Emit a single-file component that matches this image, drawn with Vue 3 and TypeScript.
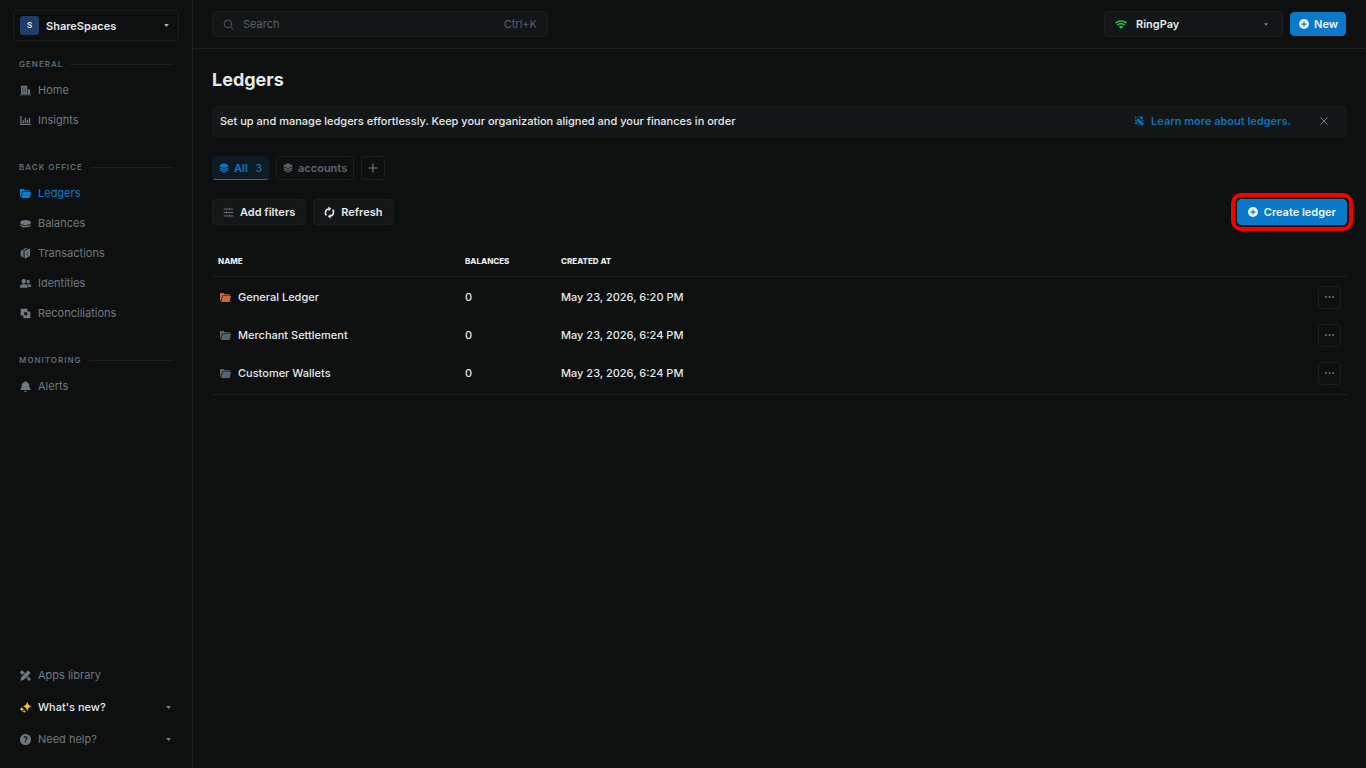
<script setup lang="ts">
import { ref } from 'vue'

interface NavItem {
  label: string
  icon: string
  active?: boolean
}
interface NavGroup {
  title: string
  items: NavItem[]
}
interface Ledger {
  name: string
  balances: number
  createdAt: string
  primary?: boolean
}

const icons: Record<string, string> = {
  building: 'M1.500 1h9v13h-9zM11.500 6h3v8h-3zM0 13.500h16V15H0zM3.500 3.500V5h1.700V3.500zM6.800 3.500V5h1.700V3.500zM3.500 6.500V8h1.700V6.500zM6.800 6.500V8h1.700V6.500zM3.500 9.500V11h1.700V9.500zM6.800 9.500V11h1.700V9.500z',
  chart: 'M.5 1.500h1.800v11.200H15.500v1.800H.5zM3.800 7.500h2v4.300h-2zM6.800 4h2v7.800h-2zM9.800 7h2v4.800h-2zM12.800 4.500h2v7.300h-2z',
  folder: 'M0 1.500h5.300l1.500 1.700H14.500V5H3.500L1.200 12.500 0 12.500zM4.200 5.700h11.800L14 14.500H1.500z',
  coin: 'M8 3c4.500 0 8 1.500 8 3.700s-3.500 3.700-8 3.700S0 8.900 0 6.700 3.500 3 8 3zM0 9c1.500 1.500 4.500 2.200 8 2.200s6.500-.7 8-2.200C16.300 12 12.500 13.500 8 13.500S-.3 12 0 9z',
  cards: 'M1 4.500 4.200 2v11.500L1 11.500zM5 1.700 8.500 0l2 .9-4.300 2.400V14.500L5 14zM7 4l7.500-3.200V11.500L7 15.800zM10 5.500v6.800l.8-.4V5.100z',
  people: 'M5.500 1.500a3.200 3.200 0 1 1 0 6.400 3.200 3.200 0 0 1 0-6.400zM0 14v-1.700C0 10.200 2.500 8.900 5.500 8.900S11 10.200 11 12.300V14zM11.500 2.500a2.700 2.700 0 1 1-2 4.500A4.500 4.500 0 0 0 9.700 3.200 2.700 2.700 0 0 1 11.500 2.500zM12 13v-.7c0-1.300-.5-2.500-1.400-3.400 2.900-.4 5.400.9 5.400 3.200V13z',
  recon: 'M1 1h10v4h4v10H5v-4H1zM6.200 6.200v4.300h4.300V6.200z',
  bell: 'M8 0a1 1 0 0 1 1 1v.4c2.800.5 4.500 2.500 4.500 5V9l2 3v1H.5v-1l2-3V6.400c0-2.500 1.700-4.500 4.500-5V1a1 1 0 0 1 1-1zM6 14h4a2 2 0 0 1-4 0z',
  apps: 'M11.800.5 15.500 4.200 5.300 14.400.8 15.500 1.600 11zM3.600.7 7.200 4.300 5.300 6.300 4.200 5.200 3.300 6 4.400 7.100 3.800 7.800.6 4.600a1.600 1.600 0 0 1 0-2L2 1a1.300 1.300 0 0 1 1.600-.3zM11.600 8.800l3.700 3.600a1.600 1.600 0 0 1 0 2l-.8.8a1.600 1.600 0 0 1-2 0L8.800 11.600l1-1 1.500 1.500.8-.8-1.500-1.500z',
  sparkle: 'M10.500 0 12.500 4.500 16.500 6.500 12.500 8.500l-2 4.500L8.500 8.500 4.500 6.500 8.500 4.500zM2.800 7l1.100 2.400 2.400 1.100-2.400 1.100L2.800 14l-1.100-2.400-2.400-1.100 2.400-1.100zM6 11.500l.9 1.500 1.500.7-1.500.8L6 16l-.9-1.500-1.500-.8 1.500-.7z',
  help: 'M8 0a8 8 0 1 1 0 16A8 8 0 0 1 8 0zM5 5.800h1.800C6.800 5 7.300 4.700 8 4.700c.8 0 1.300.4 1.300 1.100 0 .6-.4.9-1 1.300-.8.5-1.200 1-1.200 2.200h1.700c0-.7.300-.9 1-1.400.7-.5 1.300-1.100 1.300-2.200C11.100 4.100 9.800 3.200 8 3.200 6.200 3.200 5 4.200 5 5.800zM7 10.700v1.800h1.900v-1.800z',
  plusCircle: 'M8 0a8 8 0 1 1 0 16A8 8 0 0 1 8 0zM7 4v3H4v2h3v3h2V9h3V7H9V4z',
  layers: 'M8 .5 15 3.500v1.700L8 8.500 1 5.200V3.500zM1 6.400 8 9.700l7-3.300v2.500L8 12.200 1 8.900zM1 10.100l7 3.300 7-3.300v2L8 15.700 1 12.100z',
  wand: 'M6.500 3.500 16 12.500 13 15.500 3.500 7zM1 .5 5 2.500 2.500 4.500zM7.500 0l2 2.500L7 3zM0 6l3.200.2L2.700 8.500zM1 10.500l3.500-2 1 2.500-2.500 3zM10 .5l4.500.8-.5 3.900-3.500-.5zM12.500 6l3 .5-1.200 2.500zM6 11.500l2.500 1.500L7 16z',
}

const groups: NavGroup[] = [
  {
    title: 'General',
    items: [
      { label: 'Home', icon: 'building' },
      { label: 'Insights', icon: 'chart' },
    ],
  },
  {
    title: 'Back office',
    items: [
      { label: 'Ledgers', icon: 'folder', active: true },
      { label: 'Balances', icon: 'coin' },
      { label: 'Transactions', icon: 'cards' },
      { label: 'Identities', icon: 'people' },
      { label: 'Reconciliations', icon: 'recon' },
    ],
  },
  { title: 'Monitoring', items: [{ label: 'Alerts', icon: 'bell' }] },
]

const ledgers: Ledger[] = [
  { name: 'General Ledger', balances: 0, createdAt: 'May 23, 2026, 6:20 PM', primary: true },
  { name: 'Merchant Settlement', balances: 0, createdAt: 'May 23, 2026, 6:24 PM' },
  { name: 'Customer Wallets', balances: 0, createdAt: 'May 23, 2026, 6:24 PM' },
]

const query = ref('')
const bannerOpen = ref(true)
</script>

<template>
  <div class="shell">
    <aside class="sidebar">
      <div class="org">
        <span class="avatar">S</span>
        <select class="picker" aria-label="Organization">
          <option>ShareSpaces</option>
        </select>
        <svg class="caret light" viewBox="0 0 6 4"><path d="M0 0h6L3 4z" /></svg>
      </div>
      <nav class="nav">
        <section v-for="group in groups" :key="group.title" class="group">
          <h2 class="group-title">{{ group.title }}</h2>
          <a v-for="item in group.items" :key="item.label" href="#" class="nav-item" :class="{ active: item.active }">
            <svg class="icon" viewBox="0 0 16 16"><path fill-rule="evenodd" :d="icons[item.icon]" /></svg>
            <span>{{ item.label }}</span>
          </a>
        </section>
      </nav>
      <div class="foot">
        <a href="#" class="foot-item">
          <svg class="icon" viewBox="0 0 16 16"><path :d="icons.apps" /></svg>
          <span>Apps library</span>
        </a>
        <button type="button" class="foot-item news">
          <svg class="icon gold" viewBox="0 0 16 16"><path :d="icons.sparkle" /></svg>
          <span>What's new?</span>
          <svg class="caret" viewBox="0 0 6 4"><path d="M0 0h6L3 4z" /></svg>
        </button>
        <button type="button" class="foot-item">
          <svg class="icon" viewBox="0 0 16 16"><path fill-rule="evenodd" :d="icons.help" /></svg>
          <span>Need help?</span>
          <svg class="caret" viewBox="0 0 6 4"><path d="M0 0h6L3 4z" /></svg>
        </button>
      </div>
    </aside>

    <div class="body">
      <header class="topbar">
        <label class="search">
          <svg class="line-icon" viewBox="0 0 16 16"><circle cx="7" cy="7" r="5.500" /><path d="m11 11 4 4" /></svg>
          <input v-model="query" type="text" placeholder="Search" aria-label="Search" />
          <span>Ctrl+K</span>
        </label>
        <div class="top-actions">
          <div class="ledger-env">
            <svg class="wifi" viewBox="0 0 16 12">
              <path d="M.8 4C5 .6 11 .6 15.200 4M3 6.800c2.900-2.300 7.100-2.300 10 0" />
              <path class="dot" d="M4.800 8.700c1.900-1.400 4.500-1.400 6.400 0L8 12z" />
            </svg>
            <select class="picker" aria-label="Workspace">
              <option>RingPay</option>
            </select>
            <svg class="caret small" viewBox="0 0 6 4"><path d="M0 0h6L3 4z" /></svg>
          </div>
          <button type="button" class="btn primary compact">
            <svg class="btn-icon" viewBox="0 0 16 16"><path fill-rule="evenodd" :d="icons.plusCircle" /></svg>
            New
          </button>
        </div>
      </header>

      <main class="content">
        <h1>Ledgers</h1>

        <div v-if="bannerOpen" class="banner">
          <p>Set up and manage ledgers effortlessly. Keep your organization aligned and your finances in order</p>
          <a href="#">
            <svg class="btn-icon" viewBox="0 0 16 16"><path :d="icons.wand" /></svg>
            Learn more about ledgers.
          </a>
          <button type="button" class="close" aria-label="Dismiss" @click="bannerOpen = false">
            <svg viewBox="0 0 8 8"><path d="m.5.5 7 7m0-7-7 7" /></svg>
          </button>
        </div>

        <div class="tabs">
          <button type="button" class="tab current">
            <svg class="btn-icon" viewBox="0 0 16 16"><path :d="icons.layers" /></svg>
            All <span class="count">3</span>
          </button>
          <button type="button" class="tab">
            <svg class="btn-icon" viewBox="0 0 16 16"><path :d="icons.layers" /></svg>
            accounts
          </button>
          <button type="button" class="tab add" aria-label="Add view">
            <svg viewBox="0 0 10 10"><path d="M5 .5v9M.5 5h9" /></svg>
          </button>
        </div>

        <div class="toolbar">
          <button type="button" class="btn">
            <svg class="line-icon filter" viewBox="0 0 16 16"><path d="M1 3h8M11 3h4M1 8h3M6 8h9M1 13h8M11 13h4M10 1v4M5 6v4M10 11v4" /></svg>
            Add filters
          </button>
          <button type="button" class="btn">
            <svg class="line-icon sync" viewBox="0 0 16 16">
              <path d="M3.500 12.200A5.800 5.800 0 0 1 7 2.600M12.500 3.800A5.800 5.800 0 0 1 9 13.400" />
              <path class="solid" d="M6.500 -1v7l4-3.500zM9.500 10v7l-4-3.500z" />
            </svg>
            Refresh
          </button>
          <button type="button" class="btn primary create">
            <svg class="btn-icon" viewBox="0 0 16 16"><path fill-rule="evenodd" :d="icons.plusCircle" /></svg>
            Create ledger
          </button>
        </div>

        <table class="table">
          <thead>
            <tr>
              <th class="col-name">Name</th>
              <th class="col-balances">Balances</th>
              <th>Created at</th>
              <th class="col-actions" aria-label="Actions"></th>
            </tr>
          </thead>
          <tbody>
            <tr v-for="ledger in ledgers" :key="ledger.name">
              <td>
                <div class="ledger-name">
                  <svg class="icon" :class="{ orange: ledger.primary }" viewBox="0 0 16 16"><path :d="icons.folder" /></svg>
                  {{ ledger.name }}
                </div>
              </td>
              <td>{{ ledger.balances }}</td>
              <td>{{ ledger.createdAt }}</td>
              <td>
                <button type="button" class="more" :aria-label="`Actions for ${ledger.name}`">
                  <svg viewBox="0 0 10 2"><circle cx="1" cy="1" r="1" /><circle cx="5" cy="1" r="1" /><circle cx="9" cy="1" r="1" /></svg>
                </button>
              </td>
            </tr>
          </tbody>
        </table>
      </main>
    </div>
  </div>
</template>

<style>
body {
  margin: 0;
  background: #0d100f;
}
</style>

<style scoped>
.shell {
  display: flex;
  min-height: 100vh;
  color: #e4e9ec;
  font-family: Inter, "Liberation Sans", sans-serif;
  font-size: 11px;
  line-height: 16px;
}
.shell *,
.shell *::before,
.shell *::after {
  box-sizing: border-box;
}
button,
input,
select {
  margin: 0;
  padding: 0;
  border: 0;
  background: none;
  color: inherit;
  font: inherit;
}
button,
select {
  cursor: pointer;
}
a {
  color: inherit;
  text-decoration: none;
}
svg {
  flex: none;
  display: block;
  fill: currentColor;
}
.icon {
  width: 11px;
  height: 11px;
  overflow: visible;
}
.btn-icon {
  width: 10px;
  height: 10px;
}
.line-icon {
  width: 11px;
  height: 11px;
  overflow: visible;
  fill: none;
  stroke: currentColor;
  stroke-width: 1.4px;
}
.caret {
  width: 5px;
  height: 3px;
  color: #7b858b;
}
.caret.light {
  color: #aab2b7;
}
.caret.small {
  width: 4px;
}
.picker {
  flex: 1;
  min-width: 0;
  appearance: none;
  outline: none;
  font-weight: 600;
}
.picker option {
  background: #141718;
}

.sidebar {
  flex: none;
  display: flex;
  flex-direction: column;
  width: 193px;
  padding: 10px 13px 13px;
  border-right: 1px solid #1b1f20;
}
.org {
  display: flex;
  align-items: center;
  height: 31px;
  padding: 0 9px 0 6px;
  gap: 7px;
  border: 1px solid #1a1e1f;
  border-radius: 4px;
}
.avatar {
  width: 19px;
  height: 19px;
  border-radius: 3px;
  background: #1f3d68;
  color: #dfe7ee;
  font-size: 8px;
  font-weight: 600;
  line-height: 19px;
  text-align: center;
}
.nav {
  display: flex;
  flex-direction: column;
  gap: 21px;
  padding: 12px 6px 0;
}
.group-title {
  display: flex;
  align-items: center;
  gap: 7px;
  height: 22px;
  margin: 0;
  color: #5f6c75;
  font-size: 8px;
  font-weight: 600;
  letter-spacing: 1px;
  text-transform: uppercase;
}
.group-title::after {
  content: "";
  flex: 1;
  height: 1px;
  background: #1b1f20;
}
.nav-item,
.foot-item {
  display: flex;
  align-items: center;
  gap: 7px;
  height: 30px;
  padding-left: 1px;
  color: #6d7981;
}
.nav-item.active {
  color: #0f7bd0;
}
.foot {
  display: flex;
  flex-direction: column;
  margin-top: auto;
  padding: 0 8px 0 6px;
}
.foot-item {
  height: 32px;
  text-align: left;
}
.foot-item .caret {
  margin-left: auto;
}
.foot-item.news {
  color: #e4e9ec;
  font-weight: 500;
}
.gold {
  color: #f8c62b;
}

.body {
  flex: 1;
  min-width: 0;
}
.topbar {
  display: flex;
  align-items: center;
  justify-content: space-between;
  height: 49px;
  padding: 0 20px 0 19px;
  border-bottom: 1px solid #1b1f20;
}
.search,
.ledger-env {
  display: flex;
  align-items: center;
  height: 26px;
  border: 1px solid #1c2021;
  border-radius: 4px;
  background: #131617;
}
.search {
  width: 336px;
  padding: 0 10px;
  gap: 9px;
  color: #566068;
}
.search input {
  flex: 1;
  min-width: 0;
  outline: none;
}
.search input::placeholder {
  color: #566068;
  opacity: 1;
}
.top-actions {
  display: flex;
  align-items: center;
  gap: 7px;
}
.ledger-env {
  width: 179px;
  padding: 0 14px 0 10px;
  gap: 9px;
}
.wifi {
  width: 12px;
  height: 9px;
  fill: none;
  stroke: #27b548;
  stroke-width: 2.4px;
}
.wifi .dot {
  fill: #27b548;
  stroke: none;
}

.content {
  padding: 17px 19px 0;
}
h1 {
  margin: 0;
  font-size: 18px;
  font-weight: 700;
  line-height: 28px;
}
.banner {
  display: flex;
  align-items: center;
  height: 32px;
  margin-top: 11px;
  padding: 0 19px 0 8px;
  border-radius: 4px;
  background: #141718;
}
.banner p {
  flex: 1;
  margin: 0;
  font-weight: 500;
}
.banner a {
  display: flex;
  align-items: center;
  gap: 7px;
  color: #1070b4;
  font-weight: 600;
}
.close {
  margin-left: 29px;
}
.close svg,
.tab.add svg {
  width: 8px;
  height: 8px;
  fill: none;
  stroke: #748089;
}
.tabs {
  display: flex;
  gap: 7px;
  margin-top: 19px;
}
.tab {
  display: flex;
  align-items: center;
  gap: 5px;
  height: 24px;
  padding: 0 6px;
  border: 1px solid #1b1f20;
  border-radius: 4px;
  color: #59646c;
  font-weight: 600;
}
.tab.current {
  border-color: #0e1b24;
  border-bottom-color: #0e77c4;
  background: #0e1b24;
  color: #0e77c4;
}
.count {
  margin-left: 3px;
  font-size: 10px;
  font-weight: 500;
}
.tab.add {
  justify-content: center;
  width: 24px;
  padding: 0;
}
.tab.add svg {
  width: 10px;
  height: 10px;
}
.toolbar {
  display: flex;
  gap: 7px;
  margin-top: 19px;
}
.btn {
  display: flex;
  align-items: center;
  justify-content: center;
  gap: 6px;
  height: 26px;
  padding: 0 10px;
  border: 1px solid #1a1e1f;
  border-radius: 4px;
  background: #141718;
  font-weight: 600;
}
.filter {
  color: #69757d;
}
.sync {
  stroke-width: 2.4px;
}
.sync .solid {
  fill: currentColor;
  stroke: none;
}
.btn.primary {
  border-color: #0b79c9;
  background: #0b79c9;
  color: #eef6fc;
}
.btn.compact {
  gap: 5px;
  height: 24px;
  padding: 0 7px 0 8px;
}
.btn.create {
  margin-left: auto;
  outline: 4px solid #f40000;
  outline-offset: 2px;
}
.table {
  width: 100%;
  margin-top: 21px;
  padding-bottom: 3px;
  border-bottom: 1px solid #1b1f20;
  border-spacing: 0;
  table-layout: fixed;
}
th,
td {
  padding: 0 6px;
  text-align: left;
  font-weight: 500;
}
th {
  height: 31px;
  border-bottom: 1px solid #1b1f20;
  font-size: 8px;
  font-weight: 800;
  text-transform: uppercase;
}
td {
  height: 38px;
  padding-top: 2px;
}
.col-name {
  width: 247px;
}
.col-balances {
  width: 96px;
}
.col-actions {
  width: 36px;
}
.ledger-name {
  display: flex;
  align-items: center;
  gap: 7px;
  padding-left: 2px;
}
.ledger-name .icon {
  color: #56646e;
}
.ledger-name .icon.orange {
  color: #c8683d;
}
.more {
  display: flex;
  align-items: center;
  justify-content: center;
  width: 23px;
  height: 23px;
  margin-left: auto;
  border: 1px solid #1b1f20;
  border-radius: 4px;
  color: #737d83;
}
.more svg {
  width: 9px;
  height: 2px;
}
</style>
